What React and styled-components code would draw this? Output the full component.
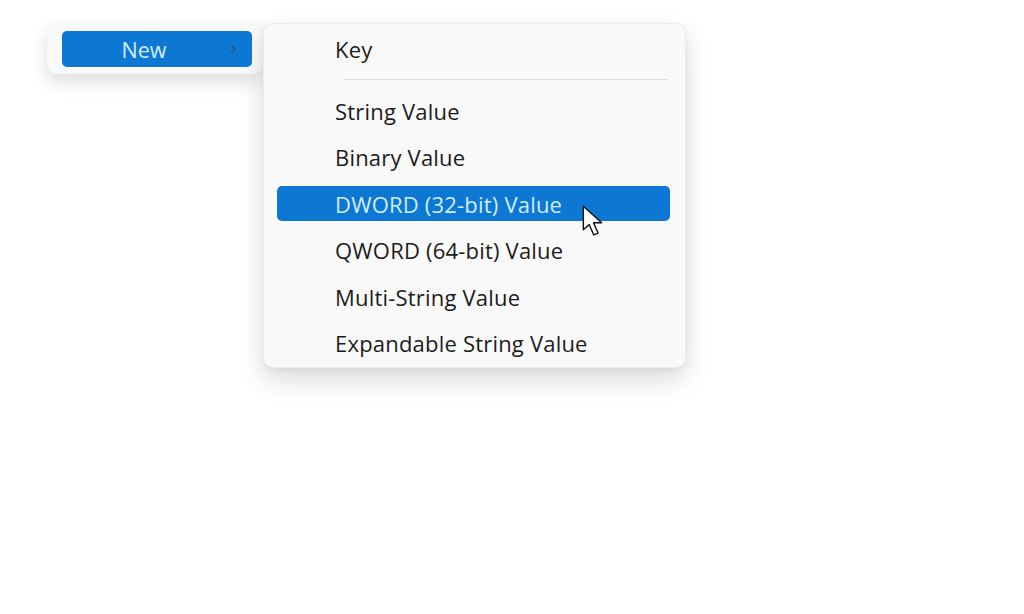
import styled, { createGlobalStyle } from 'styled-components';

const GlobalStyle = createGlobalStyle`
  html, body {
    margin: 0;
    padding: 0;
    background: #ffffff;
    font-family: 'Open Sans', 'Noto Sans', sans-serif;
  }
`;

const items = [
  'String Value',
  'Binary Value',
  'DWORD (32-bit) Value',
  'QWORD (64-bit) Value',
  'Multi-String Value',
  'Expandable String Value',
];

const App = () => {
  return (
    <Page>
      <GlobalStyle />
      <ParentMenu>
        <ParentItem>
          <span>New</span>
          <Chevron viewBox="0 0 10 10">
            <path d="M3.6 1.8 L6.7 5 L3.6 8.2" />
          </Chevron>
        </ParentItem>
      </ParentMenu>

      <SubMenu>
        <MenuItem>Key</MenuItem>
        <Separator />
        <ItemList>
          {items.map((label, i) => (
            <MenuItem key={label} active={i === 2}>
              {label}
              {i === 2 && (
                <Cursor viewBox="0 0 18 26">
                  <path
                    d="M1 1 L1 19.5 L5.6 15.3 L9.2 23.6 L12.6 22.1 L9 14 L15.4 14 Z"
                    fill="#ffffff"
                    stroke="#111111"
                    strokeWidth="1.1"
                    strokeLinejoin="round"
                  />
                </Cursor>
              )}
            </MenuItem>
          ))}
        </ItemList>
      </SubMenu>
    </Page>
  );
};

const Page = styled.div`
  display: flex;
  align-items: flex-start;
  padding: 23px 0 0 47px;
  height: 614px;
  box-sizing: border-box;
`;

const ParentMenu = styled.div`
  width: 216px;
  box-sizing: border-box;
  padding: 8px 11px 7px 15px;
  background: #f9f9f9;
  border-radius: 9px;
  box-shadow: 0 8px 18px rgba(0, 0, 0, 0.13), 0 0 1px rgba(0, 0, 0, 0.1);
`;

const ParentItem = styled.div`
  position: relative;
  display: flex;
  align-items: center;
  justify-content: center;
  height: 36px;
  border-radius: 5px;
  background: #0c78d4;
  color: #d6ecff;
  font-size: 21.5px;

  span {
    margin-right: 26px;
  }
`;

const Chevron = styled.svg`
  position: absolute;
  right: 13px;
  top: 12px;
  width: 12px;
  height: 12px;
  fill: none;
  stroke: #2a5886;
  stroke-width: 1.5;
`;

const SubMenu = styled.div`
  width: 423px;
  height: 345px;
  box-sizing: border-box;
  padding: 7px 15px 0 13px;
  background: #f9f9f9;
  border-radius: 10px;
  border: 1px solid rgba(0, 0, 0, 0.05);
  box-shadow: 0 12px 26px rgba(0, 0, 0, 0.14), 0 2px 6px rgba(0, 0, 0, 0.05);
`;

const ItemList = styled.div`
  display: flex;
  flex-direction: column;
  gap: 11.6px;
`;

const MenuItem = styled.div`
  position: relative;
  display: flex;
  align-items: center;
  height: 35px;
  padding-left: 58px;
  border-radius: 5px;
  font-size: 22px;
  letter-spacing: 0.2px;
  color: ${(p) => (p.active ? '#d2ebff' : '#1c1c1c')};
  background: ${(p) => (p.active ? '#0c78d4' : 'transparent')};
`;

const Separator = styled.div`
  height: 1px;
  margin: 13px 2px 13px 67px;
  background: #dedede;
`;

const Cursor = styled.svg`
  position: absolute;
  left: 305px;
  top: 19px;
  width: 23px;
  height: 33px;
`;

export default App;
